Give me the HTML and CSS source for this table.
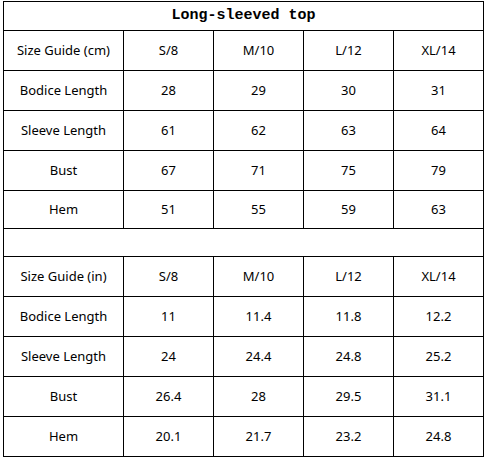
FILE: index.html
```html
<!DOCTYPE html>
<html>
<head>
<meta charset="utf-8">
<link rel="stylesheet" href="styles.css">
</head>
<body>
<div class="wrap">
<table class="sizes">
  <colgroup>
    <col class="c-label"><col class="c-val"><col class="c-val"><col class="c-val"><col class="c-val">
  </colgroup>
  <tr class="r-title"><td colspan="5" class="title">Long-sleeved top</td></tr>
  <tr><td>Size Guide (cm)</td><td>S/8</td><td>M/10</td><td>L/12</td><td>XL/14</td></tr>
  <tr><td>Bodice Length</td><td>28</td><td>29</td><td>30</td><td>31</td></tr>
  <tr><td>Sleeve Length</td><td>61</td><td>62</td><td>63</td><td>64</td></tr>
  <tr><td>Bust</td><td>67</td><td>71</td><td>75</td><td>79</td></tr>
  <tr class="r-short"><td>Hem</td><td>51</td><td>55</td><td>59</td><td>63</td></tr>
  <tr class="r-empty"><td colspan="5"></td></tr>
  <tr><td>Size Guide (in)</td><td>S/8</td><td>M/10</td><td>L/12</td><td>XL/14</td></tr>
  <tr><td>Bodice Length</td><td>11</td><td>11.4</td><td>11.8</td><td>12.2</td></tr>
  <tr><td>Sleeve Length</td><td>24</td><td>24.4</td><td>24.8</td><td>25.2</td></tr>
  <tr><td>Bust</td><td>26.4</td><td>28</td><td>29.5</td><td>31.1</td></tr>
  <tr><td>Hem</td><td>20.1</td><td>21.7</td><td>23.2</td><td>24.8</td></tr>
</table>
</div>
</body>
</html>
```

FILE: styles.css
```css
html, body {
  margin: 0;
  padding: 0;
  background: #fff;
}
.wrap {
  padding: 1px 0 0 3px;
}
.sizes {
  border-collapse: collapse;
  table-layout: fixed;
  width: 481px;
  font-family: "Noto Sans", "Open Sans", sans-serif;
  font-size: 13px;
  color: #000;
}
.c-label { width: 120px; }
.c-val { width: 90px; }
.sizes td {
  border: 1px solid #000;
  padding: 0 0 2px 0;
  height: 37px;
  text-align: center;
  vertical-align: middle;
  line-height: 16px;
}
.sizes .r-title td {
  height: 27px;
  padding: 0 0 1px 0;
}
.sizes .r-short td {
  height: 35px;
}
.sizes .r-empty td {
  height: 27px;
  padding: 0;
}
.sizes td.title {
  font-family: "Liberation Mono", "DejaVu Sans Mono", monospace;
  font-weight: bold;
  font-size: 15px;
}
```
